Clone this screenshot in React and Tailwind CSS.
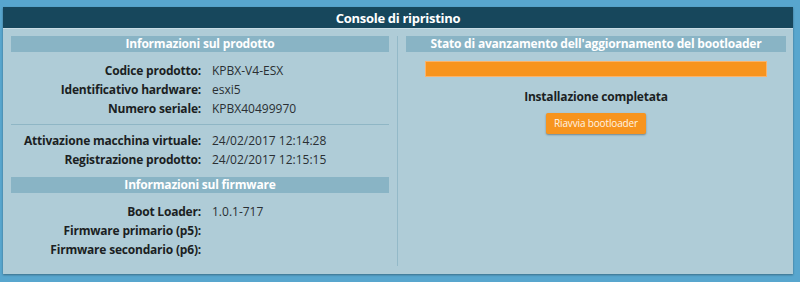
const font = { fontFamily: '"Open Sans", "DejaVu Sans", sans-serif' };

function SectionBar({ children }) {
  return (
    <div className="h-[16px] bg-[#89b4c5] text-white font-bold text-[12px] tracking-[-0.2px] leading-[16px] text-center">
      {children}
    </div>
  );
}

function Row({ label, value }) {
  return (
    <div className="flex h-[19px] items-center text-[12px]">
      <div className="w-[190px] text-right font-bold tracking-[-0.2px] text-[#1b1f23]">{label}</div>
      <div className="pl-[11px] text-[#2a2f33]">{value}</div>
    </div>
  );
}

export default function App() {
  return (
    <div className="w-[800px] h-[282px] bg-[#58a6ce] pt-[7px] px-[3px]" style={font}>
      <div className="w-[790px] h-[267px] bg-[#afccd7] shadow-[0_1px_2px_rgba(0,0,0,0.35)] flex flex-col">
        <div className="h-[22px] bg-[#17475c] border-b border-[#c9dde5] text-white font-bold text-[13px] tracking-[-0.3px] leading-[22px] text-center">
          Console di ripristino
        </div>
        <div className="flex flex-1 pt-[7px] pb-[8px] pl-[8px] pr-[7px]">
          <div className="w-[387px] pr-[8px] border-r border-[#93b9c8]">
            <SectionBar>Informazioni sul prodotto</SectionBar>
            <div className="mt-[9px]">
              <Row label="Codice prodotto:" value="KPBX-V4-ESX" />
              <Row label="Identificativo hardware:" value="esxi5" />
              <Row label="Numero seriale:" value="KPBX40499970" />
            </div>
            <div className="mt-[6px] h-px bg-[#8fb6c5]" />
            <div className="mt-[6px]">
              <Row label="Attivazione macchina virtuale:" value="24/02/2017 12:14:28" />
              <Row label="Registrazione prodotto:" value="24/02/2017 12:15:15" />
            </div>
            <div className="mt-[8px]">
              <SectionBar>Informazioni sul firmware</SectionBar>
            </div>
            <div className="mt-[9px]">
              <Row label="Boot Loader:" value="1.0.1-717" />
              <Row label="Firmware primario (p5):" value="" />
              <Row label="Firmware secondario (p6):" value="" />
            </div>
          </div>
          <div className="w-[380px] ml-[8px]">
            <SectionBar>Stato di avanzamento dell'aggiornamento del bootloader</SectionBar>
            <div className="mx-[19px] mt-[9px] h-[16px] bg-[#f7941e] border border-[#fbb36a]" />
            <div className="mt-[10px] h-[19px] leading-[19px] text-center font-bold text-[12px] tracking-[-0.2px] text-[#1b1f23]">
              Installazione completata
            </div>
            <div className="mt-[7px] flex justify-center">
              <button className="w-[100px] h-[21px] bg-[#f7941e] rounded-[2px] text-[#fff4e6] text-[10px] tracking-[-0.15px] shadow-[0_1px_2px_rgba(0,0,0,0.35)]">
                Riavvia bootloader
              </button>
            </div>
          </div>
        </div>
      </div>
    </div>
  );
}
